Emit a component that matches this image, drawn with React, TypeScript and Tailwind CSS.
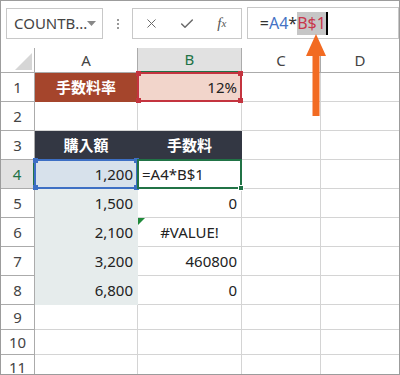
import React from "react";
import { X, Check } from "lucide-react";

const FONT = "font-['Segoe_UI','Noto_Sans','Noto_Sans_CJK_JP',sans-serif]";

interface Row {
  n: number;
  h: string;
}

const rows: Row[] = [
  { n: 1, h: "h-[29px]" },
  { n: 2, h: "h-[29px]" },
  { n: 3, h: "h-[29px]" },
  { n: 4, h: "h-[29px]" },
  { n: 5, h: "h-[29px]" },
  { n: 6, h: "h-[29px]" },
  { n: 7, h: "h-[29px]" },
  { n: 8, h: "h-[29px]" },
  { n: 9, h: "h-[25px]" },
  { n: 10, h: "h-[25px]" },
  { n: 11, h: "h-[25px]" },
];

const amounts: Record<number, string> = { 4: "1,200", 5: "1,500", 6: "2,100", 7: "3,200", 8: "6,800" };
const fees: Record<number, string> = { 5: "0", 7: "460800", 8: "0" };

// little squares on the corners of a reference highlight
const Corners: React.FC<{ color: string }> = ({ color }) => (
  <>
    <span className={`absolute -left-[3px] -top-[3px] w-[5px] h-[5px] ${color}`}></span>
    <span className={`absolute -right-[3px] -top-[3px] w-[5px] h-[5px] ${color}`}></span>
    <span className={`absolute -left-[3px] -bottom-[3px] w-[5px] h-[5px] ${color}`}></span>
    <span className={`absolute -right-[3px] -bottom-[3px] w-[5px] h-[5px] ${color}`}></span>
  </>
);

function cellA(n: number) {
  if (n === 1)
    return (
      <div className="w-[103px] h-full border-r border-b border-[#a5452c] bg-[#a5452c] flex items-center justify-center text-white font-bold text-[15px]">
        手数料率
      </div>
    );
  if (n === 3)
    return (
      <div className="w-[103px] h-full border-r border-b border-[#333743] bg-[#333743] flex items-center justify-center text-white font-bold text-[15px]">
        購入額
      </div>
    );
  if (n === 4)
    return (
      <div className="relative w-[103px] h-full border-r border-b border-[#d4d4d4] bg-[#d7e1eb] flex items-center justify-end pr-[4px] text-[15px] text-[#222]">
        {amounts[n]}
        <div className="absolute -left-px -top-px w-[104px] h-[30px] border-2 border-[#3d6fc4]">
          <Corners color="bg-[#3d6fc4]" />
        </div>
      </div>
    );
  if (amounts[n])
    return (
      <div className="w-[103px] h-full border-r border-b border-[#e6ecec] bg-[#e6ecec] flex items-center justify-end pr-[4px] text-[15px] text-[#222]">
        {amounts[n]}
      </div>
    );
  return <div className="w-[103px] h-full border-r border-b border-[#d4d4d4]"></div>;
}

function cellB(n: number) {
  if (n === 1)
    return (
      <div className="relative w-[104px] h-full border-r border-b border-[#d4d4d4] bg-[#f2d5cb] flex items-center justify-end pr-[4px] text-[15px] text-[#222]">
        12%
        <div className="absolute -left-px -top-px w-[105px] h-[30px] border-2 border-[#c4343f]">
          <Corners color="bg-[#c4343f]" />
        </div>
      </div>
    );
  if (n === 3)
    return (
      <div className="w-[104px] h-full border-r border-b border-[#333743] bg-[#333743] flex items-center justify-center text-white font-bold text-[15px]">
        手数料
      </div>
    );
  if (n === 4)
    return (
      <div className="relative w-[104px] h-full border-r border-b border-[#d4d4d4] bg-white flex items-center pl-[4px] text-[15px] text-[#222]">
        =A4*B$1
        <div className="absolute -left-px -top-px w-[105px] h-[30px] border-2 border-[#217346]">
          <span className="absolute -right-[4px] -bottom-[4px] w-[6px] h-[6px] bg-[#217346] border border-white"></span>
        </div>
      </div>
    );
  if (n === 6)
    return (
      <div className="relative w-[104px] h-full border-r border-b border-[#d4d4d4] flex items-center justify-center text-[15px] text-[#222]">
        <svg className="absolute left-0 top-0" width="7" height="7" viewBox="0 0 7 7">
          <polygon points="0,0 7,0 0,7" fill="#1f8a3a" />
        </svg>
        #VALUE!
      </div>
    );
  if (fees[n])
    return (
      <div className="w-[104px] h-full border-r border-b border-[#d4d4d4] flex items-center justify-end pr-[4px] text-[15px] text-[#222]">
        {fees[n]}
      </div>
    );
  return <div className="w-[104px] h-full border-r border-b border-[#d4d4d4]"></div>;
}

export default function App() {
  return (
    <div className={`relative w-[400px] h-[375px] overflow-hidden bg-white border border-[#9c9c9c] ${FONT}`}>
      {/* formula bar */}
      <div className="h-[47px] flex items-start pt-[7px] pl-[5px]">
        <div className="w-[102px] h-[31px] border border-[#c8c8c8] flex items-center pl-[7px] pr-[6px] text-[15px] text-[#444]">
          <span className="flex-1">COUNTB...</span>
          <svg width="9" height="5" viewBox="0 0 9 5">
            <polygon points="0,0 9,0 4.5,5" fill="#888" />
          </svg>
        </div>
        <div className="w-[30px] h-[31px] flex flex-col items-center justify-center gap-[2px]">
          <span className="w-[2px] h-[2px] bg-[#999]"></span>
          <span className="w-[2px] h-[2px] bg-[#999]"></span>
          <span className="w-[2px] h-[2px] bg-[#999]"></span>
        </div>
        <div className="w-[110px] h-[31px] border border-[#c8c8c8] flex items-center">
          <div className="w-[38px] flex justify-center">
            <X size={15} strokeWidth={1.6} color="#6a6a6a" />
          </div>
          <div className="w-[32px] flex justify-center">
            <Check size={16} strokeWidth={2.2} color="#6a6a6a" />
          </div>
          <div className="w-[38px] flex justify-center font-['Liberation_Serif',serif] italic text-[15px] text-[#555]">
            f<span className="text-[11px] mt-[3px]">x</span>
          </div>
        </div>
        <div className="ml-[5px] w-[160px] h-[32px] -mt-px border border-[#c8c8c8] flex items-center pl-[12px] text-[16px]">
          <span className="text-[#333]">=</span>
          <span className="text-[#4472c4]">A4</span>
          <span className="text-[#333]">*</span>
          <span className="bg-[#c6c6c6] text-[#c8354b] leading-[23px]">B$1</span>
          <span className="w-[2px] h-[23px] bg-black"></span>
        </div>
      </div>

      {/* column headers */}
      <div className="flex h-[25px] text-[15px] text-[#444]">
        <div className="relative w-[34px] h-full border-r border-b border-[#ababab]">
          <svg className="absolute right-[2px] bottom-[2px]" width="17" height="17" viewBox="0 0 17 17">
            <polygon points="17,0 17,17 0,17" fill="#d6d6d6" />
          </svg>
        </div>
        <div className="w-[103px] h-full border-r border-b border-[#ababab] flex items-center justify-center">A</div>
        <div className="w-[104px] h-full border-r border-[#ababab] border-b-2 border-b-[#217346] bg-[#e1e1e1] flex items-center justify-center text-[#217346]">
          B
        </div>
        <div className="w-[79px] h-full border-r border-b border-[#ababab] flex items-center justify-center">C</div>
        <div className="flex-1 h-full border-b border-[#ababab] flex items-center justify-center">D</div>
      </div>

      {/* rows */}
      {rows.map((r) => (
        <div key={r.n} className={`flex ${r.h}`}>
          {r.n === 4 ? (
            <div className="w-[34px] h-full border-r-2 border-r-[#217346] border-b border-b-[#ababab] bg-[#e1e1e1] flex items-center justify-center text-[15px] text-[#217346]">
              4
            </div>
          ) : (
            <div className="w-[34px] h-full border-r border-b border-[#ababab] flex items-center justify-center text-[15px] text-[#444]">
              {r.n}
            </div>
          )}
          {cellA(r.n)}
          {cellB(r.n)}
          <div className="w-[79px] h-full border-r border-b border-[#d4d4d4]"></div>
          <div className="flex-1 h-full border-b border-[#d4d4d4]"></div>
        </div>
      ))}

      {/* orange arrow pointing at B$1 */}
      <svg className="absolute left-[305px] top-[33px]" width="20" height="82" viewBox="0 0 20 82">
        <polygon points="10,0 20,22 13.5,22 13.5,82 6.5,82 6.5,22 0,22" fill="#f26b22" />
      </svg>
    </div>
  );
}
